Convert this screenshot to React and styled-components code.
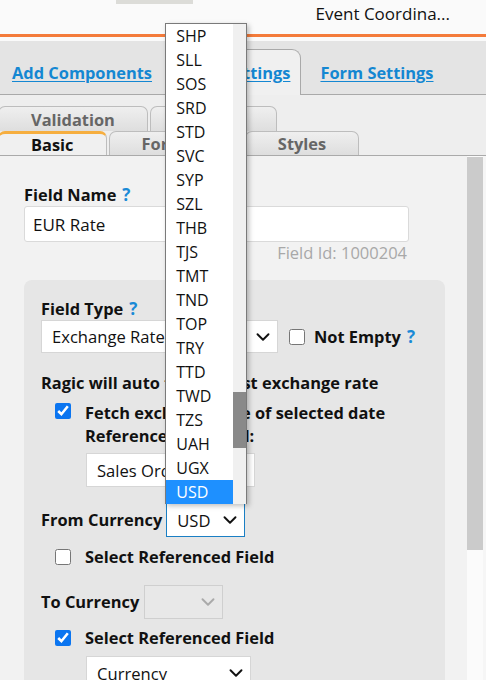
import React from 'react'
import styled, { createGlobalStyle } from 'styled-components'
import { ChevronDown } from 'lucide-react'

const GlobalStyle = createGlobalStyle`
  html, body {
    margin: 0;
    padding: 0;
  }
  body {
    font-family: "Open Sans", "Liberation Sans", sans-serif;
    background: #fafafa;
    color: #111;
    overflow: hidden;
  }
`

const Page = styled.div`
  width: 486px;
  height: 680px;
  overflow: hidden;
  background: #fafafa;
`

const Header = styled.div`
  height: 34px;
  display: flex;
  align-items: flex-start;
  border-bottom: 3px solid #f47b3b;
`
const LogoStub = styled.div`
  width: 77px;
  height: 4px;
  margin-left: 116px;
  background: #dcdcd8;
`
const UserName = styled.div`
  margin-left: auto;
  margin-right: 36px;
  font-size: 17px;
  line-height: 28px;
  color: #111;
`

const TopTabs = styled.div`
  margin-top: 4px;
  height: 54px;
  box-sizing: border-box;
  padding-top: 8px;
  display: flex;
  align-items: flex-end;
  background: #e4e4e4;
  border-bottom: 1px solid #a9a9a9;
`
const TopTab = styled.div`
  height: 46px;
  box-sizing: border-box;
  display: flex;
  align-items: center;
  padding: ${p => (p.$active ? '0 10px 0 14px' : '0 11px')};
  margin-left: ${p => (p.$active ? '2px' : '0')};
  margin-right: ${p => (p.$active ? '7px' : '0')};
  margin-bottom: -1px;
  background: ${p => (p.$active ? '#f0f0f0' : 'transparent')};
  border: 1px solid ${p => (p.$active ? '#a9a9a9' : 'transparent')};
  border-bottom: none;
  border-radius: 9px 9px 0 0;
`
const TabLink = styled.a`
  font-size: 16.4px;
  font-weight: 700;
  color: #1487d2;
  text-decoration: underline;
  text-underline-offset: 2px;
`

const SubTabs = styled.div`
  height: 61px;
  box-sizing: border-box;
  padding-top: 11px;
  background: #eeeeee;
  border-bottom: 1px solid #aaa;
`
const SubTabRow = styled.div`
  display: flex;
  gap: 2px;
  margin-left: -2px;
`
const SubTab = styled.div`
  height: ${p => (p.$top ? '25px' : '24px')};
  box-sizing: border-box;
  padding: 0 32px;
  display: flex;
  align-items: center;
  justify-content: center;
  font-size: 16.4px;
  font-weight: 700;
  color: ${p => (p.$active ? '#111' : '#666')};
  border: 1px solid #bdbdbd;
  border-bottom: none;
  border-top: ${p => (p.$active ? '3px solid #f6ae3f' : '1px solid #bdbdbd')};
  border-radius: 7px 7px 0 0;
  background: ${p => (p.$active ? '#f0f0f0' : 'linear-gradient(#efefef, #dedede)')};
`

const Body = styled.div`
  display: flex;
  height: 524px;
`
const Content = styled.div`
  flex: 1;
  background: #f2f2f2;
  padding: 29px 22px 0 24px;
`
const ScrollTrack = styled.div`
  width: 16px;
  background: #fbfbfb;
`
const ScrollThumb = styled.div`
  height: 393px;
  margin-top: 1px;
  background: #cbcbcb;
`
const Edge = styled.div`
  width: 3px;
  background: #f6f6f6;
`

const Label = styled.div`
  font-size: 16.4px;
  font-weight: 700;
  line-height: 20px;
  color: #111;
  white-space: nowrap;
`
const Help = styled.span`
  color: #1a8ad6;
  font-size: 17px;
  font-weight: 700;
  margin-left: 6px;
`
const TextInput = styled.div`
  margin-top: 1px;
  width: 385px;
  height: 36px;
  box-sizing: border-box;
  display: flex;
  align-items: center;
  padding-left: 8px;
  background: #fff;
  border: 1px solid #dadada;
  border-radius: 3px;
  font-size: 17px;
`
const FieldId = styled.div`
  width: 383px;
  margin-top: 1px;
  text-align: right;
  font-size: 16.5px;
  line-height: 20px;
  color: #a8a8a8;
`

const InnerBox = styled.div`
  margin-top: 17px;
  height: 420px;
  background: #e6e6e6;
  border-radius: 8px;
  padding: 19px 17px 0 17px;
`
const Row = styled.div`
  display: flex;
  align-items: center;
  margin-top: ${p => p.$mt || 0}px;
  margin-left: ${p => p.$ml || 0}px;
  gap: ${p => p.$gap || 0}px;
`
const Select = styled.div`
  position: relative;
  width: ${p => p.$w}px;
  height: ${p => p.$h || 34}px;
  box-sizing: border-box;
  display: flex;
  align-items: center;
  justify-content: space-between;
  padding: 0 3px 0 10px;
  margin-top: ${p => p.$mt || 0}px;
  margin-left: ${p => p.$ml || 0}px;
  font-size: 16.6px;
  color: ${p => (p.$disabled ? '#999' : '#111')};
  background: ${p => (p.$disabled ? '#e8e8e8' : '#fff')};
  border: 1px solid ${p => (p.$focus ? '#1a7fc4' : p.$disabled ? '#cfcfcf' : '#d6d6d6')};
`
const Check = styled.input`
  width: 16px;
  height: 16px;
  margin: 0;
  accent-color: #0b75f0;
`
const CheckText = styled.div`
  font-size: 16.4px;
  font-weight: 700;
  line-height: 23px;
  color: #111;
  white-space: nowrap;
`
const FetchRow = styled.div`
  display: flex;
  align-items: flex-start;
  gap: 14px;
  margin: 8px 0 0 14px;
  & > input {
    margin-top: 2px;
  }
`

const Popup = styled.div`
  position: absolute;
  left: -2px;
  bottom: 100%;
  width: 80px;
  display: flex;
  background: #fff;
  border: 1px solid #7a7a7a;
  border-bottom: none;
  box-shadow: 2px 2px 5px rgba(0, 0, 0, 0.25);
  z-index: 5;
`
const Options = styled.div`
  flex: 1;
`
const Option = styled.div`
  height: 24px;
  line-height: 24px;
  padding-left: 10px;
  font-size: 16px;
  font-weight: 400;
  color: ${p => (p.$selected ? '#fff' : '#111')};
  background: ${p => (p.$selected ? '#1e90ff' : '#fff')};
`
const PopupTrack = styled.div`
  width: 13px;
  background: #f0f0f0;
`
const PopupThumb = styled.div`
  height: 56px;
  margin-top: 368px;
  background: #898989;
`

const currencies = [
  'SHP', 'SLL', 'SOS', 'SRD', 'STD', 'SVC', 'SYP', 'SZL', 'THB', 'TJS',
  'TMT', 'TND', 'TOP', 'TRY', 'TTD', 'TWD', 'TZS', 'UAH', 'UGX', 'USD',
]

const Chevron = ({ color = '#111' }) => (
  <ChevronDown size={22} strokeWidth={2.1} color={color} />
)

const App = () => {
  return (
    <Page>
      <GlobalStyle />
      <Header>
        <LogoStub />
        <UserName>Event Coordina...</UserName>
      </Header>

      <TopTabs>
        <TopTab><TabLink>Add Components</TabLink></TopTab>
        <TopTab $active><TabLink>Field Settings</TabLink></TopTab>
        <TopTab><TabLink>Form Settings</TabLink></TopTab>
      </TopTabs>

      <SubTabs>
        <SubTabRow>
          <SubTab $top>Validation</SubTab>
          <SubTab $top>Actions</SubTab>
        </SubTabRow>
        <SubTabRow>
          <SubTab $active>Basic</SubTab>
          <SubTab>Formula</SubTab>
          <SubTab>Styles</SubTab>
        </SubTabRow>
      </SubTabs>

      <Body>
        <Content>
          <Label>Field Name<Help>?</Help></Label>
          <TextInput>EUR Rate</TextInput>
          <FieldId>Field Id: 1000204</FieldId>

          <InnerBox>
            <Label>Field Type<Help>?</Help></Label>
            <Row $mt={1}>
              <Select $w={237} $h={33}>Exchange Rate<Chevron /></Select>
              <Check type="checkbox" style={{ marginLeft: 11 }} />
              <Label style={{ marginLeft: 9 }}>Not Empty<Help>?</Help></Label>
            </Row>

            <Label style={{ marginTop: 20 }}>Ragic will auto fetch latest exchange rate</Label>
            <FetchRow>
              <Check type="checkbox" defaultChecked />
              <CheckText>
                Fetch exchange rate of selected date<br />
                Reference date field:
              </CheckText>
            </FetchRow>
            <Select $w={169} $mt={6} $ml={45}>Sales Order Date<Chevron /></Select>

            <Row $mt={16} $gap={4}>
              <Label>From Currency</Label>
              <Select $w={79} $focus>
                USD<Chevron />
                <Popup>
                  <Options>
                    {currencies.map(c => (
                      <Option key={c} $selected={c === 'USD'}>{c}</Option>
                    ))}
                  </Options>
                  <PopupTrack><PopupThumb /></PopupTrack>
                </Popup>
              </Select>
            </Row>
            <Row $mt={8} $ml={14} $gap={14}>
              <Check type="checkbox" />
              <CheckText>Select Referenced Field</CheckText>
            </Row>

            <Row $mt={17} $gap={5}>
              <Label>To Currency</Label>
              <Select $w={79} $disabled><span /><Chevron color="#aaa" /></Select>
            </Row>
            <Row $mt={7} $ml={14} $gap={14}>
              <Check type="checkbox" defaultChecked />
              <CheckText>Select Referenced Field</CheckText>
            </Row>
            <Select $w={165} $mt={7} $ml={45}>Currency<Chevron /></Select>
          </InnerBox>
        </Content>
        <ScrollTrack><ScrollThumb /></ScrollTrack>
        <Edge />
      </Body>
    </Page>
  )
}

export default App
